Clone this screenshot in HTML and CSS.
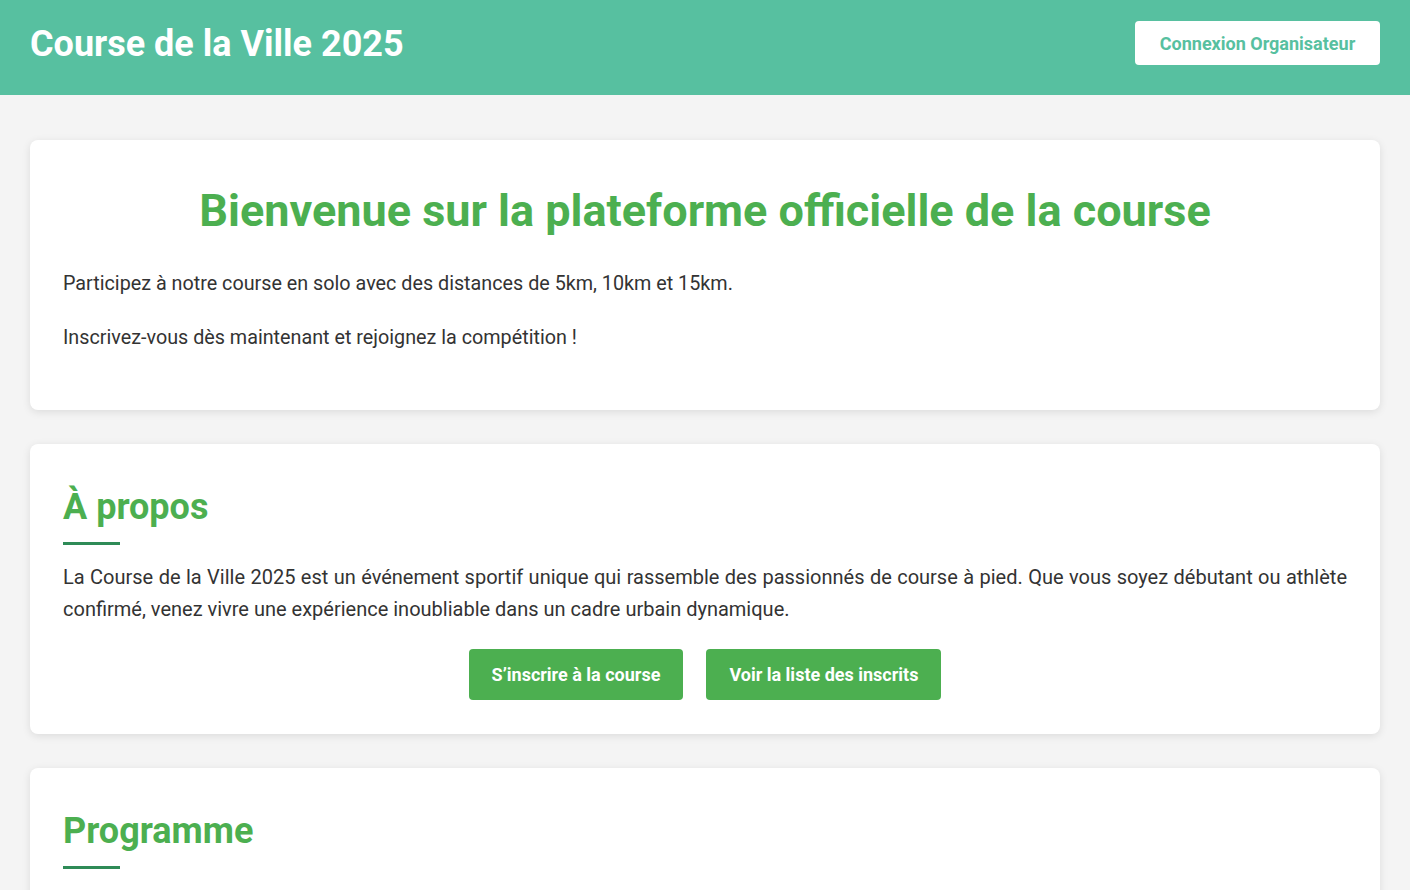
FILE: index.html
```html
<!DOCTYPE html>
<html lang="fr">
<head>
<meta charset="utf-8">
<title>Course de la Ville 2025</title>
<link rel="stylesheet" href="styles.css">
</head>
<body>
<header class="site-header">
  <div class="brand">Course de la Ville 2025</div>
  <a class="login-btn" href="#">Connexion Organisateur</a>
</header>
<main class="content">
  <section class="card">
    <h1 class="hero-title">Bienvenue sur la plateforme officielle de la course</h1>
    <p class="text text-hero">Participez à notre course en solo avec des distances de 5km, 10km et 15km.</p>
    <p class="text text-hero">Inscrivez-vous dès maintenant et rejoignez la compétition !</p>
  </section>
  <section class="card">
    <h2 class="section-title">À propos</h2>
    <p class="text text-about">La Course de la Ville 2025 est un événement sportif unique qui rassemble des passionnés de course à pied. Que vous soyez débutant ou athlète confirmé, venez vivre une expérience inoubliable dans un cadre urbain dynamique.</p>
    <div class="actions">
      <a class="btn" href="#">S’inscrire à la course</a>
      <a class="btn" href="#">Voir la liste des inscrits</a>
    </div>
  </section>
  <section class="card card-program">
    <h2 class="section-title">Programme</h2>
  </section>
</main>
</body>
</html>
```
FILE: styles.css
```css
* { box-sizing: border-box; }
html, body { margin: 0; padding: 0; }
body {
  font-family: Roboto, "Liberation Sans", sans-serif;
  background: #f4f4f4;
  color: #333;
}
.site-header {
  background: #57c0a0;
  height: 95px;
  padding: 0 30px 9px;
  display: flex;
  align-items: center;
  justify-content: space-between;
}
.brand {
  color: #fff;
  font-size: 36px;
  font-weight: 700;
  margin-top: 1px;
}
.login-btn {
  background: #fff;
  color: #57c0a0;
  text-decoration: none;
  font-weight: 700;
  font-size: 18px;
  width: 245px;
  height: 44px;
  display: flex;
  align-items: center;
  justify-content: center;
  border-radius: 4px;
}
.content {
  padding: 45px 30px;
  display: flex;
  flex-direction: column;
  gap: 34px;
}
.card {
  background: #fff;
  border-radius: 8px;
  box-shadow: 0 2px 8px rgba(0,0,0,0.1);
  padding: 32px 33px 34px;
}
.card-program { min-height: 160px; }
.hero-title {
  margin: 10px 0 27.5px;
  text-align: center;
  color: #4caf50;
  font-size: 45px;
  font-weight: 700;
  line-height: 1.3;
}
.text {
  margin: 0 0 22px;
  font-size: 20px;
  line-height: 32px;
}
.text-hero { font-size: 19.75px; }
.section-title {
  margin: 10px 0 0;
  color: #4caf50;
  font-size: 36px;
  font-weight: 700;
  line-height: 1.2;
}
.section-title::after {
  content: "";
  display: block;
  width: 57px;
  height: 3px;
  background: #2e8b57;
  margin-top: 13px;
}
.text-about {
  margin: 16px 0 0;
  text-align: justify;
}
.actions {
  display: flex;
  justify-content: center;
  gap: 23px;
  margin-top: 24px;
}
.btn {
  background: #4caf50;
  color: #fff;
  text-decoration: none;
  font-weight: 700;
  font-size: 18px;
  height: 51px;
  padding: 0 23px;
  display: flex;
  align-items: center;
  border-radius: 4px;
}
```
